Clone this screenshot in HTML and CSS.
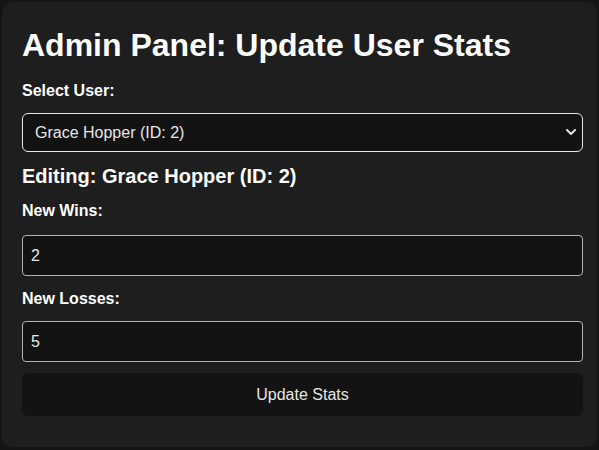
FILE: index.html
```html
<!DOCTYPE html>
<html lang="en">
<head>
<meta charset="utf-8">
<title>Admin Panel</title>
<link rel="stylesheet" href="styles.css">
</head>
<body>
<div class="card">
  <h1 class="title">Admin Panel: Update User Stats</h1>
  <label class="label label-first" for="user">Select User:</label>
  <div class="select-wrap">
    <select id="user" class="select">
      <option>Grace Hopper (ID: 2)</option>
    </select>
    <svg class="chevron" width="10" height="6" viewBox="0 0 10 6" aria-hidden="true"><path d="M1 1 L5 5 L9 1" fill="none" stroke="#e0e0e0" stroke-width="2" stroke-linecap="round" stroke-linejoin="round"/></svg>
  </div>
  <h2 class="editing">Editing: Grace Hopper (ID: 2)</h2>
  <label class="label label-wins" for="wins">New Wins:</label>
  <input id="wins" class="field field-wins" type="number" value="2">
  <label class="label label-losses" for="losses">New Losses:</label>
  <input id="losses" class="field field-losses" type="number" value="5">
  <button class="btn" type="button">Update Stats</button>
</div>
</body>
</html>
```
FILE: styles.css
```css
html, body {
  margin: 0;
  background: #141414;
}
body {
  padding: 2px;
  font-family: "Liberation Sans", Arial, sans-serif;
  color: #ffffff;
}
.card {
  background: #1e1e1e;
  border-radius: 10px;
  padding: 25px 14px 31px 20px;
  display: flex;
  flex-direction: column;
}
.title {
  margin: 0;
  font-size: 32px;
  line-height: 37px;
  font-weight: bold;
  color: #ffffff;
}
.label {
  display: block;
  font-size: 16px;
  line-height: 18px;
  font-weight: bold;
  color: #ffffff;
}
.label-first { margin-top: 18px; }
.label-wins { margin-top: 14px; }
.label-losses { margin-top: 14px; }
.select-wrap {
  position: relative;
  margin-top: 13px;
}
.select {
  appearance: none;
  -webkit-appearance: none;
  width: 100%;
  height: 39px;
  box-sizing: border-box;
  background: #121212;
  color: #e6e6e6;
  border: 1px solid #e8e8e8;
  border-radius: 6px;
  padding: 0 12px;
  font-family: "Liberation Sans", Arial, sans-serif;
  font-size: 16px;
  outline: none;
}
.chevron {
  position: absolute;
  right: 7px;
  top: 16px;
  pointer-events: none;
}
.editing {
  margin: 13px 0 0;
  font-size: 20px;
  line-height: 23px;
  font-weight: bold;
  color: #ffffff;
}
.field {
  width: 100%;
  height: 41px;
  box-sizing: border-box;
  background: #121212;
  color: #e6e6e6;
  border: 1px solid #b4b4b4;
  border-radius: 4px;
  padding: 0 8px;
  font-family: "Liberation Sans", Arial, sans-serif;
  font-size: 16px;
  outline: none;
  -moz-appearance: textfield;
}
.field::-webkit-inner-spin-button,
.field::-webkit-outer-spin-button {
  -webkit-appearance: none;
  margin: 0;
}
.field-wins { margin-top: 15px; }
.field-losses { margin-top: 13px; }
.btn {
  margin-top: 11px;
  height: 43px;
  width: 100%;
  background: #131313;
  color: #e6e6e6;
  border: none;
  border-radius: 6px;
  font-family: "Liberation Sans", Arial, sans-serif;
  font-size: 16px;
}
```
